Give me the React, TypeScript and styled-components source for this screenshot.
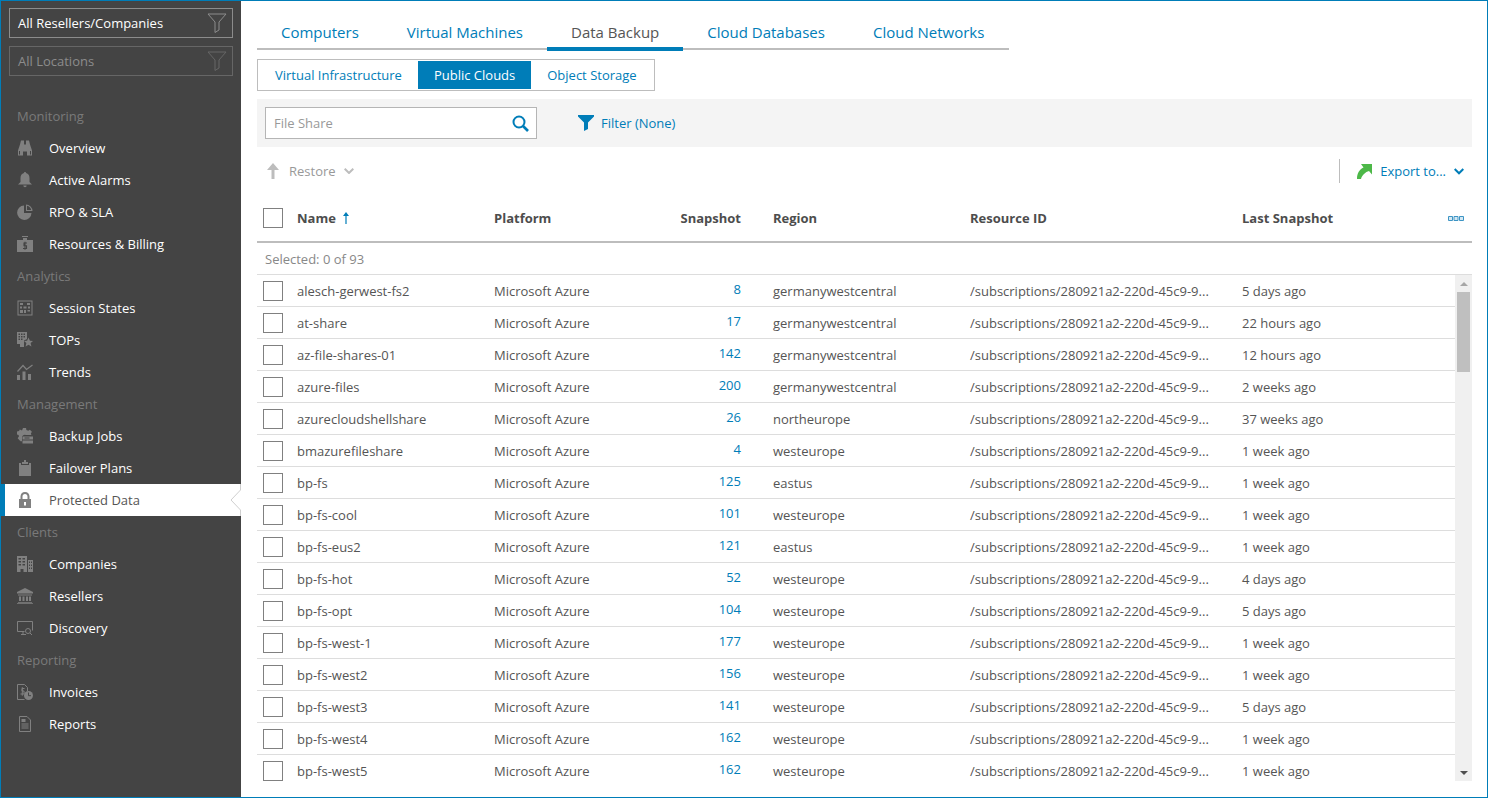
import React from 'react'
import styled, { createGlobalStyle } from 'styled-components'

const BLUE = '#007db8'
const TEXT = '#555555'
const ICON = '#808080'
const PANEL = '#444444'

const GlobalStyle = createGlobalStyle`
  html, body {
    margin: 0;
    padding: 0;
    background: #ffffff;
  }
  body {
    font-family: 'Open Sans', 'Liberation Sans', sans-serif;
    font-size: 13px;
    color: ${TEXT};
  }
  * {
    box-sizing: border-box;
  }
`

const Frame = styled.div`
  display: flex;
  width: 1488px;
  height: 798px;
  border: 1px solid ${BLUE};
  overflow: hidden;
  background: #ffffff;
`

const Sidebar = styled.aside`
  flex: 0 0 240px;
  background: ${PANEL};
  padding-top: 7px;
`

const ScopeSelect = styled.div<{ $dim?: boolean }>`
  display: flex;
  align-items: center;
  justify-content: space-between;
  width: 224px;
  height: 30px;
  margin: 0 0 8px 8px;
  padding: 0 5px 0 8px;
  border: 1px solid ${p => (p.$dim ? '#666666' : '#8c8c8c')};
  color: ${p => (p.$dim ? '#8c8c8c' : '#ffffff')};
  svg {
    stroke: ${p => (p.$dim ? '#666666' : '#8c8c8c')};
  }
`

const Nav = styled.nav`
  margin-top: 24px;
`

const SectionLabel = styled.div`
  display: flex;
  align-items: center;
  height: 32px;
  padding-left: 16px;
  color: #7a7a7a;
`

const NavItem = styled.div<{ $active?: boolean }>`
  position: relative;
  display: flex;
  align-items: center;
  height: 32px;
  padding-left: ${p => (p.$active ? '12px' : '16px')};
  border-left: ${p => (p.$active ? `4px solid ${BLUE}` : '0')};
  background: ${p => (p.$active ? '#ffffff' : 'transparent')};
  color: ${p => (p.$active ? TEXT : '#ffffff')};
`

const NavGlyph = styled.svg`
  flex: 0 0 16px;
  width: 16px;
  height: 16px;
  margin-right: 16px;
  fill: ${ICON};
`

const Notch = styled.svg`
  position: absolute;
  top: 0;
  right: 0;
  width: 11px;
  height: 32px;
  fill: none;
  stroke: #cfcfcf;
`

const Main = styled.main`
  flex: 1;
  min-width: 0;
  padding: 15px 15px 0 16px;
`

const Tabs = styled.div`
  display: flex;
  width: 752px;
  height: 34px;
  border-bottom: 2px solid #bdbdbd;
`

const Tab = styled.div<{ $active?: boolean }>`
  display: flex;
  align-items: center;
  height: 35px;
  padding: 1px 24px 0;
  font-size: 15px;
  color: ${p => (p.$active ? TEXT : BLUE)};
  border-bottom: 4px solid ${p => (p.$active ? BLUE : 'transparent')};
`

const SubTabs = styled.div`
  display: inline-flex;
  height: 32px;
  margin-top: 9px;
  padding: 1px;
  border: 1px solid #bdbdbd;
  vertical-align: top;
`

const SubTab = styled.div<{ $active?: boolean }>`
  display: flex;
  align-items: center;
  padding: 0 16px;
  color: ${p => (p.$active ? '#ffffff' : BLUE)};
  background: ${p => (p.$active ? BLUE : 'transparent')};
`

const FilterBar = styled.div`
  display: flex;
  align-items: center;
  height: 48px;
  margin-top: 8px;
  padding: 0 8px;
  background: #f4f4f4;
`

const SearchBox = styled.div`
  display: flex;
  align-items: center;
  justify-content: space-between;
  width: 272px;
  height: 32px;
  padding: 0 7px 0 8px;
  border: 1px solid #b5b5b5;
  background: #ffffff;
  color: #999999;
`

const FilterLink = styled.div`
  display: flex;
  align-items: center;
  gap: 7px;
  margin-left: 41px;
  color: ${BLUE};
`

const ActionBar = styled.div`
  display: flex;
  align-items: center;
  height: 48px;
  padding: 0 8px 0 10px;
`

const RestoreAction = styled.div`
  display: flex;
  align-items: center;
  color: #999999;
  gap: 10px;
`

const RestoreChevron = styled.svg`
  margin-left: -2px;
  fill: none;
  stroke: #bdbdbd;
  stroke-width: 2;
`

const ExportAction = styled.div`
  display: flex;
  align-items: center;
  height: 24px;
  margin-left: auto;
  padding-left: 17px;
  border-left: 1px solid #bdbdbd;
  color: ${BLUE};
  gap: 8px;
`

const columns = '40px 197px 140px 139px 197px 272px 1fr'

const HeadRow = styled.div`
  display: grid;
  grid-template-columns: ${columns};
  align-items: center;
  height: 48px;
  border-bottom: 2px solid #bdbdbd;
  font-weight: 700;
  color: #4d4d4d;
`

const Check = styled.div`
  width: 20px;
  height: 20px;
  margin-left: 6px;
  border: 1px solid #808080;
  background: #ffffff;
`

const NameHead = styled.div`
  display: flex;
  align-items: center;
  gap: 7px;
`

const HeadNumber = styled.div`
  padding-right: 32px;
  text-align: right;
`

const LastHead = styled.div`
  display: flex;
  align-items: center;
  justify-content: space-between;
  padding-right: 8px;
`

const SelectedRow = styled.div`
  display: flex;
  align-items: center;
  height: 32px;
  padding-left: 8px;
  border-bottom: 1px solid #dddddd;
  color: #888888;
`

const TableBody = styled.div`
  display: flex;
  height: 506px;
  overflow: hidden;
`

const Rows = styled.div`
  flex: 1;
  min-width: 0;
`

const Row = styled.div`
  display: grid;
  grid-template-columns: ${columns};
  align-items: center;
  height: 32px;
  border-bottom: 1px solid #dddddd;
`

const SnapshotLink = styled.div`
  padding: 0 32px 4px 0;
  text-align: right;
  color: ${BLUE};
`

const Cell = styled.div`
  white-space: nowrap;
`

const Scrollbar = styled.div`
  display: flex;
  flex: 0 0 17px;
  flex-direction: column;
  align-items: center;
  background: #f0f0f0;
`

const ScrollArrow = styled.div<{ $down?: boolean }>`
  flex: 0 0 17px;
  display: flex;
  align-items: center;
  justify-content: center;
  margin-top: ${p => (p.$down ? 'auto' : '0')};
  &::before {
    content: '';
    border-left: 4px solid transparent;
    border-right: 4px solid transparent;
    border-bottom: ${p => (p.$down ? '0' : '4px solid #a6a6a6')};
    border-top: ${p => (p.$down ? '4px solid #505050' : '0')};
  }
`

const ScrollThumb = styled.div`
  width: 13px;
  height: 80px;
  background: #bfbfbf;
`

const Funnel = () => (
  <svg width="20" height="20" viewBox="0 0 20 20" fill="none" strokeWidth="1">
    <path d="M1 1h18l-7 8v8l-4 2.500V9z" />
  </svg>
)

const Glyph = ({ name }: { name: string }) => {
  const cut = PANEL
  switch (name) {
    case 'binoculars':
      return (
        <NavGlyph viewBox="0 0 16 16">
          <path d="M4 .5h3v4h2v-4h3l1 4 2 6v5h-5v-4H6v4H1v-5l2-6z" />
          <path d="M2.500 11v3.500M13.500 11v3.500" stroke={cut} fill="none" />
        </NavGlyph>
      )
    case 'bell':
      return (
        <NavGlyph viewBox="0 0 16 16">
          <path d="M8 0c.6 0 1 .4 1 1 2.400.5 3.500 2.500 3.500 5v4l2.500 2.500H1L3.500 10V6c0-2.500 1.100-4.500 3.500-5 0-.6.4-1 1-1z" />
          <path d="M6.300 13.500h3.400a1.700 1.700 0 0 1-3.400 0z" />
        </NavGlyph>
      )
    case 'pie':
      return (
        <NavGlyph viewBox="0 0 16 16">
          <path d="M7 1.500a7.200 7.200 0 1 0 7.500 7.500H7z" />
          <path d="M9 .5a6.600 6.600 0 0 1 6.500 6.500H9zM10 1.800V6h4.200A5.500 5.500 0 0 0 10 1.800z" fillRule="evenodd" />
        </NavGlyph>
      )
    case 'money':
      return (
        <NavGlyph viewBox="0 0 16 16">
          <path d="M5 0h6v1H5zM6 2h4v2H6zM0 4h16v12H0z" />
          <path d="M10 7H7v2.800h2.500v2.700H6M8 5.800v8" stroke={cut} fill="none" strokeWidth="1.100" />
        </NavGlyph>
      )
    case 'grid':
      return (
        <NavGlyph viewBox="0 0 16 16">
          <path fillRule="evenodd" d="M.5.5h15v15H.5zM1.500 1.500v13h13v-13z" />
          <path d="M3 3h3v2H3zM10 3h3v2h-3zM3 6.500h2v2H3zM6.500 6.500h3v2h-3zM11 6.500h2v2h-2zM3 10h3v3H3zM7 10h2v3H7zM10.500 10H13v1.500h-2.500z" />
        </NavGlyph>
      )
    case 'tops':
      return (
        <NavGlyph viewBox="0 0 16 16">
          <path fillRule="evenodd" d="M0 0h10v7l-3 1.500V15H3v-3H0zM1.500 1.500V3h1.500V1.500zM4 1.500V3h1.500V1.500zM6.500 1.500V3H8V1.500zM1.500 4v1.500H3V4zM4 4v1.500h1.500V4zM6.500 4v1.500H8V4zM1.500 6.500V8H3V6.500zM4 6.500V8h1.500V6.500z" />
          <path d="M11.500 5.500l1.400 3.200 3.100.3-2.400 2.100.8 3.400-2.900-1.800-2.900 1.800.8-3.400L7 9l3.100-.3z" />
        </NavGlyph>
      )
    case 'trends':
      return (
        <NavGlyph viewBox="0 0 16 16">
          <path d="M0 11h3v5H0zM5.500 7.500h3V16h-3zM11 10h3v6h-3z" />
          <path d="M.5 7.500L6 1.500l3.500 4 6-4.500" fill="none" stroke={ICON} strokeWidth="1.200" />
        </NavGlyph>
      )
    case 'jobs':
      return (
        <NavGlyph viewBox="0 0 16 16">
          <path d="M6 0h3l.4 2 1.800.8 1.700-1 2 2-1 1.700.5 1.500H9a3 3 0 0 0-4 3.500v2.500l-1 .5-1.500-1.200-1.800-2L2 8.300 1.500 7 0 6.500v-3l2-.4.800-1.500L5 2.500z" />
          <path d="M5.500 8.500H16v3H5.500zM5.500 12.500H16v3H5.500z" />
          <path d="M7.500 10h5" stroke={cut} fill="none" />
        </NavGlyph>
      )
    case 'clipboard':
      return (
        <NavGlyph viewBox="0 0 16 16">
          <path d="M7 0h2v2h2v2H5V2h2zM2 3h2v2h8V3h2v13H2z" />
        </NavGlyph>
      )
    case 'lock':
      return (
        <NavGlyph viewBox="0 0 16 16">
          <path fillRule="evenodd" d="M8 0c2.800 0 4.500 1.800 4.500 4.500V7H14v9H2V7h1.500V4.500C3.500 1.800 5.200 0 8 0zM5.500 7h5V4.500C10.500 3 9.500 2 8 2S5.500 3 5.500 4.500zM7 10v3.500h2V10z" />
        </NavGlyph>
      )
    case 'company':
      return (
        <NavGlyph viewBox="0 0 16 16">
          <path fillRule="evenodd" d="M0 0h10v16H6.500v-3h-3v3H0zM1.500 2v1.500H4V2zM5.500 2v1.500H8V2zM1.500 5v1.500H4V5zM5.500 5v1.500H8V5zM1.500 8v1.500H4V8zM5.500 8v1.500H8V8z" />
          <path fillRule="evenodd" d="M11 4h5v12h-5zM12 5.500V7h1V5.500zM14 5.500V7h1V5.500zM12 8.500V10h1V8.500zM14 8.500V10h1V8.500zM12 11.500V13h1v-1.500zM14 11.500V13h1v-1.500z" />
        </NavGlyph>
      )
    case 'bank':
      return (
        <NavGlyph viewBox="0 0 16 16">
          <path d="M8 0l8 4v1.500H0V4zM1 6.500h14v1H1zM2 8.500h2V13H2zM5.500 8.500h2V13h-2zM9 8.500h2V13H9zM12 8.500h2V13h-2zM1 14h14v.8H1zM0 15.200h16v.8H0z" />
        </NavGlyph>
      )
    case 'discovery':
      return (
        <NavGlyph viewBox="0 0 16 16">
          <path d="M.5 11.500v-10h15v9M.5 11.500h7M4 14.500h5M6 11.500v3" fill="none" stroke={ICON} />
          <circle cx="11" cy="11" r="2.500" fill="none" stroke={ICON} />
          <path d="M13 13l2 2" stroke={ICON} />
        </NavGlyph>
      )
    case 'invoice':
      return (
        <NavGlyph viewBox="0 0 16 16">
          <path d="M7.500 15.500H.5V.5h7l3 3V7" fill="none" stroke={ICON} />
          <path d="M7.500 4.500H5V7h2v3H3.500M5.300 3.200v8.500" fill="none" stroke={ICON} />
          <circle cx="11.500" cy="11.500" r="4.500" />
          <path d="M11.500 8.500v3.200H14" fill="none" stroke={cut} />
        </NavGlyph>
      )
    default:
      return (
        <NavGlyph viewBox="0 0 16 16">
          <path d="M10 .5H2.500v15h11V4z" fill="none" stroke={ICON} />
          <path d="M4.500 3h4v3h-4zM4.500 7.500h7v1h-7zM4.500 9.500h7v1h-7zM4.500 11.500h7v1h-7z" />
        </NavGlyph>
      )
  }
}

const navigation: { label: string; items: { name: string; icon: string; active?: boolean }[] }[] = [
  {
    label: 'Monitoring',
    items: [
      { name: 'Overview', icon: 'binoculars' },
      { name: 'Active Alarms', icon: 'bell' },
      { name: 'RPO & SLA', icon: 'pie' },
      { name: 'Resources & Billing', icon: 'money' },
    ],
  },
  {
    label: 'Analytics',
    items: [
      { name: 'Session States', icon: 'grid' },
      { name: 'TOPs', icon: 'tops' },
      { name: 'Trends', icon: 'trends' },
    ],
  },
  {
    label: 'Management',
    items: [
      { name: 'Backup Jobs', icon: 'jobs' },
      { name: 'Failover Plans', icon: 'clipboard' },
      { name: 'Protected Data', icon: 'lock', active: true },
    ],
  },
  {
    label: 'Clients',
    items: [
      { name: 'Companies', icon: 'company' },
      { name: 'Resellers', icon: 'bank' },
      { name: 'Discovery', icon: 'discovery' },
    ],
  },
  {
    label: 'Reporting',
    items: [
      { name: 'Invoices', icon: 'invoice' },
      { name: 'Reports', icon: 'reports' },
    ],
  },
]

const shares: [string, number, string, string][] = [
  ['alesch-gerwest-fs2', 8, 'germanywestcentral', '5 days ago'],
  ['at-share', 17, 'germanywestcentral', '22 hours ago'],
  ['az-file-shares-01', 142, 'germanywestcentral', '12 hours ago'],
  ['azure-files', 200, 'germanywestcentral', '2 weeks ago'],
  ['azurecloudshellshare', 26, 'northeurope', '37 weeks ago'],
  ['bmazurefileshare', 4, 'westeurope', '1 week ago'],
  ['bp-fs', 125, 'eastus', '1 week ago'],
  ['bp-fs-cool', 101, 'westeurope', '1 week ago'],
  ['bp-fs-eus2', 121, 'eastus', '1 week ago'],
  ['bp-fs-hot', 52, 'westeurope', '4 days ago'],
  ['bp-fs-opt', 104, 'westeurope', '5 days ago'],
  ['bp-fs-west-1', 177, 'westeurope', '1 week ago'],
  ['bp-fs-west2', 156, 'westeurope', '1 week ago'],
  ['bp-fs-west3', 141, 'westeurope', '5 days ago'],
  ['bp-fs-west4', 162, 'westeurope', '1 week ago'],
  ['bp-fs-west5', 162, 'westeurope', '1 week ago'],
]

export default function App(): JSX.Element {
  return (
    <Frame>
      <GlobalStyle />
      <Sidebar>
        <ScopeSelect>
          All Resellers/Companies
          <Funnel />
        </ScopeSelect>
        <ScopeSelect $dim>
          All Locations
          <Funnel />
        </ScopeSelect>
        <Nav>
          {navigation.map(section => (
            <React.Fragment key={section.label}>
              <SectionLabel>{section.label}</SectionLabel>
              {section.items.map(item => (
                <NavItem key={item.name} $active={item.active}>
                  <Glyph name={item.icon} />
                  {item.name}
                  {item.active && (
                    <Notch viewBox="0 0 11 32">
                      <path d="M10.500 0v6L1 16l9.500 10v6" />
                    </Notch>
                  )}
                </NavItem>
              ))}
            </React.Fragment>
          ))}
        </Nav>
      </Sidebar>
      <Main>
        <Tabs>
          <Tab>Computers</Tab>
          <Tab>Virtual Machines</Tab>
          <Tab $active>Data Backup</Tab>
          <Tab>Cloud Databases</Tab>
          <Tab>Cloud Networks</Tab>
        </Tabs>
        <SubTabs>
          <SubTab>Virtual Infrastructure</SubTab>
          <SubTab $active>Public Clouds</SubTab>
          <SubTab>Object Storage</SubTab>
        </SubTabs>
        <FilterBar>
          <SearchBox>
            File Share
            <svg width="17" height="17" viewBox="0 0 17 17" fill="none" stroke={BLUE}>
              <circle cx="7" cy="7" r="5.500" strokeWidth="2" />
              <path d="M11 11l5 5" strokeWidth="2.600" />
            </svg>
          </SearchBox>
          <FilterLink>
            <svg width="16" height="16" viewBox="0 0 16 16" fill={BLUE}>
              <path d="M0 0h16v1.500L10 7.500V14l-4 2V7.500L0 1.500z" />
            </svg>
            Filter (None)
          </FilterLink>
        </FilterBar>
        <ActionBar>
          <RestoreAction>
            <svg width="12" height="16" viewBox="0 0 12 16" fill="#bdbdbd">
              <path d="M6 0l6 7H7.500v9h-3V7H0z" />
            </svg>
            Restore
            <RestoreChevron width="10" height="6" viewBox="0 0 10 6">
              <path d="M.7.7L5 5l4.300-4.300" />
            </RestoreChevron>
          </RestoreAction>
          <ExportAction>
            <svg width="15" height="16" viewBox="0 0 15 16" fill="#4db848">
              <path d="M0 16C0 10 2.500 6.500 6.500 4.500L4 1h11v10.500l-3-3.500C8.500 9 5 12 4 16z" />
            </svg>
            Export to...
            <svg width="10" height="7" viewBox="0 0 10 7" fill="none" stroke={BLUE} strokeWidth="2">
              <path d="M.7 1L5 5.300 9.300 1" />
            </svg>
          </ExportAction>
        </ActionBar>
        <HeadRow>
          <Check />
          <NameHead>
            Name
            <svg width="6" height="12" viewBox="0 0 6 12" fill={BLUE}>
              <path d="M3 0l3 4H3.600v8H2.400V4H0z" />
            </svg>
          </NameHead>
          <div>Platform</div>
          <HeadNumber>Snapshot</HeadNumber>
          <div>Region</div>
          <div>Resource ID</div>
          <LastHead>
            Last Snapshot
            <svg width="16" height="5" viewBox="0 0 16 5" fill="#d4e8f3" stroke="#3d94c4">
              <path d="M.5.5h4v4h-4zM6 .5h4v4H6zM11.500.5h4v4h-4z" />
            </svg>
          </LastHead>
        </HeadRow>
        <SelectedRow>Selected: 0 of 93</SelectedRow>
        <TableBody>
          <Rows>
            {shares.map(([name, snapshots, region, last]) => (
              <Row key={name}>
                <Check />
                <Cell>{name}</Cell>
                <Cell>Microsoft Azure</Cell>
                <SnapshotLink>{snapshots}</SnapshotLink>
                <Cell>{region}</Cell>
                <Cell>/subscriptions/280921a2-220d-45c9-9...</Cell>
                <Cell>{last}</Cell>
              </Row>
            ))}
          </Rows>
          <Scrollbar>
            <ScrollArrow />
            <ScrollThumb />
            <ScrollArrow $down />
          </Scrollbar>
        </TableBody>
      </Main>
    </Frame>
  )
}
